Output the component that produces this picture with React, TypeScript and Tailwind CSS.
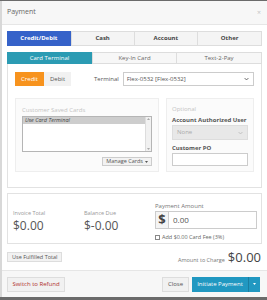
const Chevron = ({ className = "" }: { className?: string }) => (
  <svg viewBox="0 0 8 5" className={className} fill="none" stroke="currentColor" strokeWidth="1.4">
    <path d="M1 1l3 3 3-3" />
  </svg>
);

const Caret = ({ className = "" }: { className?: string }) => (
  <svg viewBox="0 0 6 4" className={className} fill="currentColor">
    <path d="M0 0h6L3 4z" />
  </svg>
);

export default function App() {
  return (
    <div
      className="w-[267px] h-[300px] bg-[#6b6b6b] pt-[1px] overflow-hidden"
      style={{ fontFamily: '"Open Sans", "Noto Sans", sans-serif' }}
    >
      <div className="h-[296px] bg-white border-l-[2px] border-[#d8d8d8] flex flex-col">
        {/* header */}
        <div className="h-[24px] shrink-0 flex items-center justify-between pl-[5px] pr-[6px] bg-[#f7f7f7] border-b border-[#e6e6e6]">
          <span className="text-[7px] text-[#666]">Payment</span>
          <span className="text-[7px] leading-none text-[#c4c4c4]">×</span>
        </div>

        <div className="px-[5px] pt-[6px] pr-[5px]">
          {/* top tabs */}
          <div className="grid grid-cols-4 h-[15px] text-[6px] font-bold">
            <div className="bg-[#3562c9] text-white flex items-center justify-center">Credit/Debit</div>
            <div className="bg-[#f4f4f4] border border-[#ddd] text-[#444] flex items-center justify-center">Cash</div>
            <div className="bg-[#f4f4f4] border border-l-0 border-[#ddd] text-[#444] flex items-center justify-center">Account</div>
            <div className="bg-[#f4f4f4] border border-l-0 border-[#ddd] text-[#444] flex items-center justify-center">Other</div>
          </div>

          {/* sub tabs */}
          <div className="grid grid-cols-3 h-[12px] mt-[6px] text-[6px]">
            <div className="bg-[#2b9bb3] text-white flex items-center justify-center">Card Terminal</div>
            <div className="bg-[#f7f7f7] border border-[#ddd] text-[#666] flex items-center justify-center">Key-In Card</div>
            <div className="bg-[#f7f7f7] border border-l-0 border-[#ddd] text-[#666] flex items-center justify-center">Text-2-Pay</div>
          </div>

          {/* card terminal panel */}
          <div className="border border-t-0 border-[#e2e2e2] px-[7px] pt-[8px] pb-[15px]">
            <div className="flex items-center h-[14px]">
              <div className="w-[29px] h-full bg-[#f7931e] text-white text-[6px] flex items-center justify-center">Credit</div>
              <div className="w-[27px] h-full bg-[#f1f1f1] text-[#555] text-[6px] flex items-center justify-center">Debit</div>
              <span className="ml-[23px] text-[6px] text-[#555]">Terminal</span>
              <div className="ml-[4px] flex-1 h-full border border-[#ccc] flex items-center justify-between pl-[3px] pr-[4px] text-[6px] text-[#555]">
                <span>Flex-0532 [Flex-0532]</span>
                <Chevron className="w-[5px] h-[4px] text-[#555]" />
              </div>
            </div>

            <div className="flex gap-[7px] mt-[12px]">
              {/* saved cards */}
              <div className="w-[144px] h-[74px] bg-[#fbfbfb] border border-[#eee] px-[6px] pt-[7px] flex flex-col">
                <span className="text-[6px] text-[#c4c4c4] leading-[8px]">Customer Saved Cards</span>
                <div className="mt-[2px] h-[36px] border border-[#b5b5b5] bg-white flex">
                  <div className="flex-1">
                    <div className="h-[7px] bg-[#cdcdcd] text-[5.5px] italic text-[#444] leading-[7px] pl-[2px]">Use Card Terminal</div>
                  </div>
                  <div className="w-[6px] border-l border-[#ddd] bg-[#f1f1f1] flex flex-col justify-between items-center py-[1px]">
                    <Caret className="w-[3px] h-[2px] text-[#aaa] rotate-180" />
                    <Caret className="w-[3px] h-[2px] text-[#aaa]" />
                  </div>
                </div>
                <div className="flex justify-end mt-[5px]">
                  <div className="h-[9px] px-[3px] bg-[#f2f2f2] border border-[#ccc] text-[5.5px] text-[#555] flex items-center gap-[2px]">
                    Manage Cards
                    <Caret className="w-[3px] h-[2px] text-[#555]" />
                  </div>
                </div>
              </div>

              {/* optional */}
              <div className="w-[88px] h-[74px] bg-[#fbfbfb] border border-[#eee] px-[5px] pt-[6px] flex flex-col">
                <span className="text-[6px] text-[#c4c4c4] leading-[8px]">Optional</span>
                <span className="mt-[3px] text-[6px] font-bold text-[#555] leading-[8px]">Account Authorized User</span>
                <div className="mt-[1px] h-[15px] bg-[#e8e8e8] border border-[#ddd] flex items-center justify-between pl-[4px] pr-[4px] text-[6px] text-[#aaa]">
                  <span>None</span>
                  <Chevron className="w-[5px] h-[4px] text-[#bbb]" />
                </div>
                <span className="mt-[4px] text-[6px] font-bold text-[#555] leading-[8px]">Customer PO</span>
                <div className="mt-[1px] h-[13px] bg-white border border-[#ccc]" />
              </div>
            </div>
          </div>

          {/* totals */}
          <div className="mt-[5px] h-[51px] border border-[#e2e2e2] flex pl-[5px] pr-[4px] pt-[8px]">
            <div className="w-[71px] pt-[8px]">
              <div className="text-[5.5px] text-[#999] leading-[7px]">Invoice Total</div>
              <div className="mt-[2px] text-[12px] text-[#555] leading-[13px]">$0.00</div>
            </div>
            <div className="w-[71px] pt-[8px]">
              <div className="text-[5.5px] text-[#999] leading-[7px]">Balance Due</div>
              <div className="mt-[2px] text-[12px] text-[#555] leading-[13px]">$-0.00</div>
            </div>
            <div className="flex-1">
              <div className="text-[6px] text-[#777] leading-[8px]">Payment Amount</div>
              <div className="mt-[1px] h-[18px] border border-[#ccc] flex">
                <div className="w-[13px] bg-[#f4f4f4] border-r border-[#ccc] flex items-center justify-center text-[13px] font-bold text-[#444]">$</div>
                <div className="flex-1 flex items-center pl-[4px] text-[8px] text-[#555]">0.00</div>
              </div>
              <div className="mt-[4px] flex items-center gap-[2px] text-[5.5px] text-[#666]">
                <div className="w-[5px] h-[5px] border border-[#888] bg-white" />
                Add $0.00 Card Fee (3%)
              </div>
            </div>
          </div>

          <div className="mt-[6px] flex items-center justify-between">
            <div className="h-[10px] px-[4px] bg-[#f2f2f2] border border-[#ddd] text-[5.5px] text-[#555] flex items-center">Use Fulfilled Total</div>
            <div className="flex items-baseline gap-[3px] pr-[1px]">
              <span className="text-[5.5px] text-[#777]">Amount to Charge</span>
              <span className="text-[13px] text-[#444] leading-[14px]">$0.00</span>
            </div>
          </div>
        </div>

        {/* footer */}
        <div className="mt-auto h-[27px] border-t border-[#e6e6e6] bg-[#f7f7f7] flex items-center justify-between pl-[5px] pr-[7px]">
          <div className="h-[15px] w-[58px] bg-[#f1f1f1] border border-[#ddd] text-[6px] text-[#b0302d] flex items-center justify-center">Switch to Refund</div>
          <div className="flex items-center gap-[3px] h-[15px]">
            <div className="h-full w-[27px] bg-[#f1f1f1] border border-[#ddd] text-[6px] text-[#555] flex items-center justify-center">Close</div>
            <div className="h-full flex bg-[#2198c1] text-white">
              <div className="w-[56px] flex items-center justify-center text-[6px]">Initiate Payment</div>
              <div className="w-[12px] border-l border-[#1a7ea1] flex items-center justify-center">
                <Caret className="w-[3px] h-[2px] text-white" />
              </div>
            </div>
          </div>
        </div>
      </div>
    </div>
  );
}
